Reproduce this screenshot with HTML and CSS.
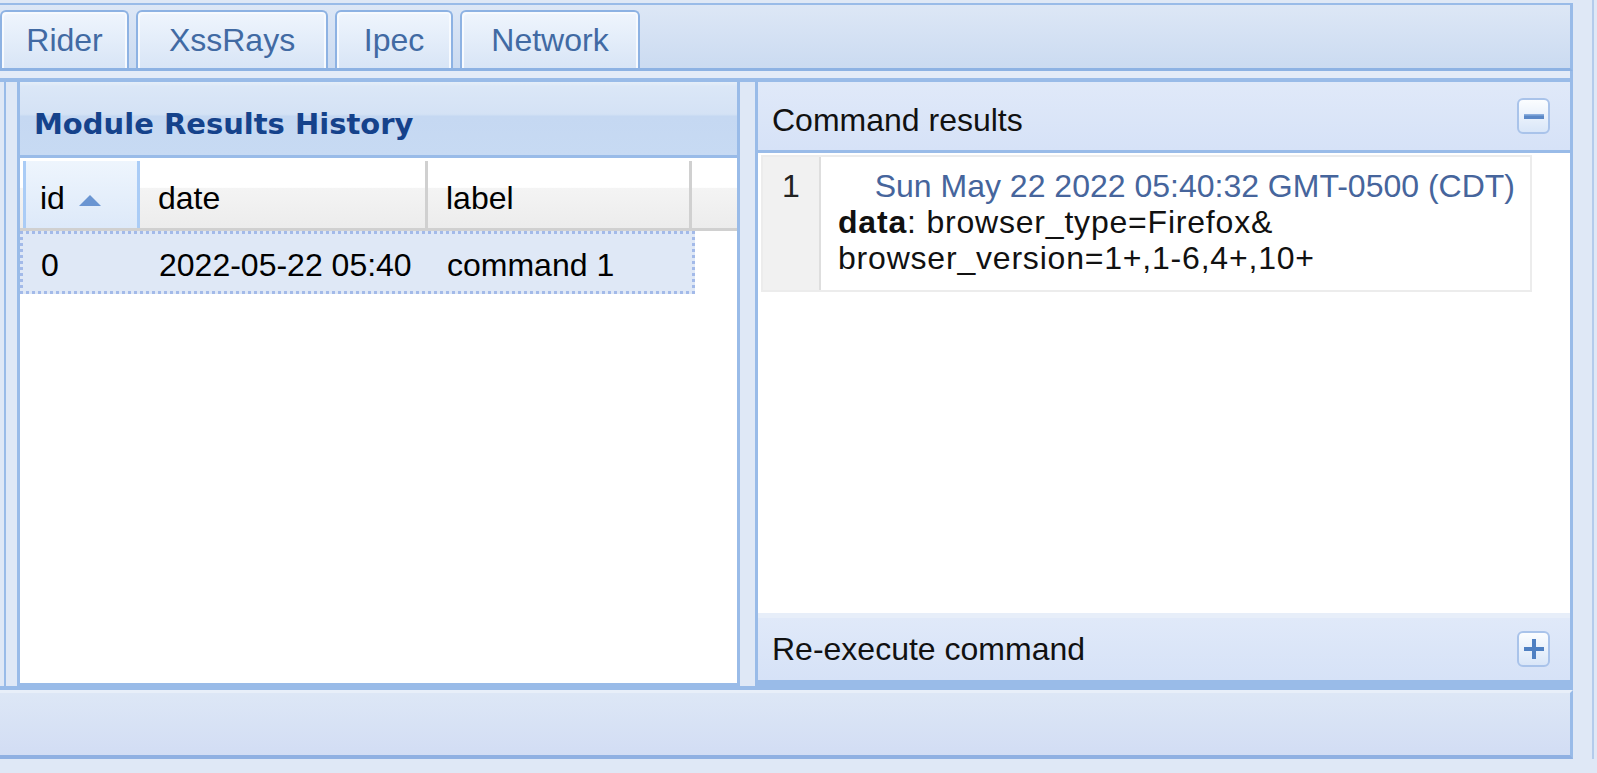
FILE: index.html
```html
<!DOCTYPE html>
<html>
<head>
<meta charset="utf-8">
<title>Module Results</title>
<link rel="stylesheet" href="styles.css">
</head>
<body>
<div class="page">
<div class="app">
  <div class="topbar"></div>
  <div class="tabstrip">
    <div class="tab tab-rider">Rider</div>
    <div class="tab tab-xss">XssRays</div>
    <div class="tab tab-ipec">Ipec</div>
    <div class="tab tab-network">Network</div>
  </div>
  <div class="tab-spacer"></div>
  <div class="main">
    <div class="west-gap"></div>
    <section class="grid-panel">
      <header class="panel-header"><span class="panel-title">Module Results History</span></header>
      <div class="grid-head">
        <div class="hd hd-id sorted">id <span class="sort-arrow"></span></div>
        <div class="hd hd-date">date</div>
        <div class="hd hd-label">label</div>
        <div class="hd hd-fill"></div>
      </div>
      <div class="grid-body">
        <div class="row selected">
          <div class="cell c-id">0</div>
          <div class="cell c-date">2022-05-22 05:40</div>
          <div class="cell c-label">command 1</div>
        </div>
      </div>
    </section>
    <div class="splitter"></div>
    <section class="result-panel">
      <div class="acc-header">
        <span>Command results</span>
        <span class="tool"><svg width="22" height="22" viewBox="0 0 22 22"><rect x="1" y="9" width="20" height="5" fill="#5b88c7"/><rect x="1" y="9" width="20" height="1.5" fill="#8aaddd"/></svg></span>
      </div>
      <div class="acc-body">
        <div class="result-box">
          <div class="gutter">1</div>
          <div class="result-content">
            <div class="result-date">Sun May 22 2022 05:40:32 GMT-0500 (CDT)</div>
            <div class="result-line"><b>data</b>: browser_type=Firefox&amp;</div>
            <div class="result-line">browser_version=1+,1-6,4+,10+</div>
          </div>
        </div>
      </div>
      <div class="acc-header acc-collapsed">
        <span>Re-execute command</span>
        <span class="tool"><svg width="22" height="22" viewBox="0 0 22 22"><rect x="1" y="9" width="20" height="4" fill="#4f80c2"/><rect x="9" y="1" width="4" height="20" fill="#4f80c2"/></svg></span>
      </div>
    </section>
  </div>
  <div class="footer"></div>
</div>
<div class="east"></div>
</div>
</body>
</html>
```
FILE: styles.css
```css
* { box-sizing: border-box; }

body {
  margin: 0;
  width: 1597px;
  height: 773px;
  overflow: hidden;
  background: #dfe8f6;
  font-family: "Liberation Sans", Arial, sans-serif;
  font-size: 32px;
  color: #000;
}

.page { display: flex; align-items: flex-start; }

.app { width: 1573px; flex: none; }

.east {
  width: 21px;
  height: 759px;
  border-right: 2px solid #b5cbeb;
}

.topbar {
  height: 5px;
  border-bottom: 2px solid #99bbe8;
}

.tabstrip {
  height: 66px;
  display: flex;
  align-items: flex-end;
  gap: 7px;
  background: linear-gradient(#dde7f6, #cbdbf1);
  border-bottom: 3px solid #8db2e3;
  border-right: 3px solid #99bbe8;
}

.tab {
  height: 58px;
  border: 2px solid #8db2e3;
  border-bottom: none;
  border-radius: 6px 6px 0 0;
  background: linear-gradient(#eff5fd, #d8e5f6);
  box-shadow: inset 2px 2px 0 #f7fafe, inset -2px 0 0 #f7fafe;
  color: #416aa3;
  font-size: 32px;
  line-height: 56px;
  text-align: center;
}
.tab-rider { width: 129px; }
.tab-xss { width: 192px; }
.tab-ipec { width: 118px; }
.tab-network { width: 180px; }

.tab-spacer {
  height: 11px;
  background: #e3ebf8;
  border-bottom: 4px solid #99bbe8;
  border-right: 3px solid #99bbe8;
}

.main {
  display: flex;
  height: 608px;
  border-bottom: 4px solid #99bbe8;
}

.west-gap {
  width: 13px;
  margin-left: 4px;
  border-left: 2px solid #99bbe8;
}

.grid-panel {
  width: 723px;
  border: 3px solid #99bbe8;
  border-top: none;
  background: #fff;
  display: flex;
  flex-direction: column;
}

.panel-header {
  height: 76px;
  flex: none;
  border-bottom: 3px solid #99bbe8;
  background: linear-gradient(#e6eef9 0, #dbe7f7 6%, #d4e2f5 44%, #c5d8f2 47%, #c7daf3 100%);
  display: flex;
  align-items: center;
  padding: 10px 0 0 14px;
}
.panel-title {
  font-family: "DejaVu Sans", Verdana, sans-serif;
  font-weight: bold;
  font-size: 29px;
  color: #15428b;
}

.grid-head {
  height: 73px;
  flex: none;
  display: flex;
  padding-left: 3px;
  border-bottom: 3px solid #d0d0d0;
  background: linear-gradient(#ffffff 0, #ffffff 42%, #f4f4f4 43%, #ececec 100%);
}
.hd {
  display: flex;
  align-items: center;
  padding: 8px 0 0 15px;
  border-left: 3px solid transparent;
  border-right: 3px solid #d0d0d0;
  margin-top: 3px;
}
.hd-id { width: 117px; padding-left: 14px; }
.hd-date { width: 288px; }
.hd-label { width: 264px; }
.hd-fill { flex: 1; border-right: none; }
.hd.sorted {
  border-left-color: #aaccf6;
  border-right-color: #aaccf6;
  background: linear-gradient(#eef5fd, #dde9f9);
}
.sort-arrow {
  width: 0;
  height: 0;
  margin: 4px 0 0 14px;
  border-left: 11px solid transparent;
  border-right: 11px solid transparent;
  border-bottom: 11px solid #6a95d2;
}

.grid-body { flex: 1; }
.row {
  width: 675px;
  height: 63px;
  display: flex;
  align-items: center;
  padding-top: 5px;
  border: 3px dotted #a3bae9;
  background: #dfe8f6;
}
.cell { white-space: nowrap; }
.c-id { width: 118px; padding-left: 18px; }
.c-date { width: 288px; padding-left: 18px; }
.c-label { padding-left: 18px; }

.splitter { width: 15px; }

.result-panel {
  width: 818px;
  border: 3px solid #99bbe8;
  border-top: none;
  display: flex;
  flex-direction: column;
}

.acc-header {
  height: 71px;
  flex: none;
  display: flex;
  align-items: center;
  justify-content: space-between;
  padding: 8px 20px 0 14px;
  border-bottom: 3px solid #99bbe8;
  background: linear-gradient(#e0e9f9, #d6e2f7);
  color: #111;
}
.acc-header .tool { margin-top: -8px; }
.acc-collapsed {
  height: 70px;
  border-top: 5px solid #e7eef9;
  padding-top: 0;
}
.acc-collapsed .tool { margin-top: 0; }

.tool {
  width: 33px;
  height: 36px;
  border: 2px solid #a9c3ea;
  border-radius: 6px;
  background: linear-gradient(#fbfdff, #d9e6f8);
  display: flex;
  align-items: center;
  justify-content: center;
}

.acc-body {
  flex: 1;
  background: #fff;
  padding: 2px 0 0 3px;
}

.result-box {
  width: 771px;
  height: 137px;
  display: flex;
  border: 2px solid #ececec;
}
.gutter {
  width: 58px;
  flex: none;
  background: #f1f1f1;
  border-right: 2px solid #dedede;
  text-align: center;
  padding-top: 11px;
  line-height: 36px;
  color: #222;
}
.result-content {
  flex: 1;
  padding: 11px 15px 0 17px;
  line-height: 36px;
  color: #111;
}
.result-date {
  text-align: right;
  color: #46659c;
}
.result-line { letter-spacing: 0.8px; }

.footer {
  height: 69px;
  border-top: 3px solid #e8eff9;
  border-bottom: 4px solid #8fb0e2;
  border-right: 3px solid #99bbe8;
  background: linear-gradient(#dde7f6, #d2ddf4);
}
```
